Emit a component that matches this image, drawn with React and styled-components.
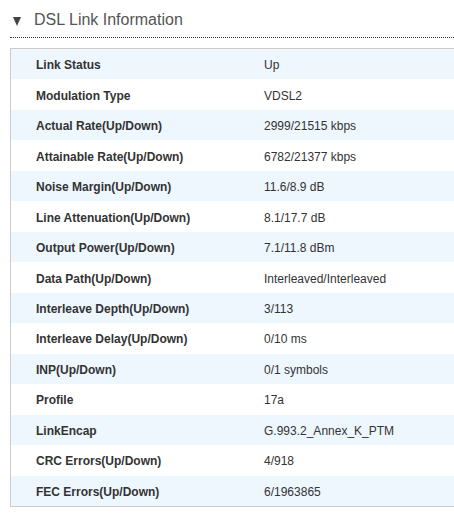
import React from 'react';
import styled, { createGlobalStyle } from 'styled-components';

const GlobalStyle = createGlobalStyle`
  body {
    margin: 0;
    background: #fff;
    font-family: "Liberation Sans", Arial, sans-serif;
  }
`;

const Page = styled.div`
  padding: 2px 0 0 10px;
  width: 444px;
`;

const Header = styled.div`
  display: flex;
  align-items: center;
  height: 36px;
  border-bottom: 1px dotted #333;
  box-sizing: border-box;
`;

const Arrow = styled.span`
  width: 0;
  height: 0;
  margin: 4px 13px 0 3px;
  border-left: 4.5px solid transparent;
  border-right: 4.5px solid transparent;
  border-top: 9px solid #444;
`;

const Title = styled.h2`
  margin: 0;
  font-size: 16px;
  font-weight: normal;
  color: #555;
`;

const Table = styled.div`
  margin-top: 10px;
  border: 1px solid #ccc;
  border-right: none;
`;

const Row = styled.div`
  display: grid;
  grid-template-columns: 228px 1fr;
  align-items: center;
  box-sizing: border-box;
  height: 30.47px;
  padding-top: 2px;
  background: ${p => (p.$odd ? '#eef6fe' : '#fff')};
  font-size: 12px;
  color: #333;
`;

const Label = styled.div`
  padding-left: 25px;
  font-weight: bold;
`;

const Value = styled.div`
  padding-left: 25px;
`;

const rows = [
  ['Link Status', 'Up'],
  ['Modulation Type', 'VDSL2'],
  ['Actual Rate(Up/Down)', '2999/21515 kbps'],
  ['Attainable Rate(Up/Down)', '6782/21377 kbps'],
  ['Noise Margin(Up/Down)', '11.6/8.9 dB'],
  ['Line Attenuation(Up/Down)', '8.1/17.7 dB'],
  ['Output Power(Up/Down)', '7.1/11.8 dBm'],
  ['Data Path(Up/Down)', 'Interleaved/Interleaved'],
  ['Interleave Depth(Up/Down)', '3/113'],
  ['Interleave Delay(Up/Down)', '0/10 ms'],
  ['INP(Up/Down)', '0/1 symbols'],
  ['Profile', '17a'],
  ['LinkEncap', 'G.993.2_Annex_K_PTM'],
  ['CRC Errors(Up/Down)', '4/918'],
  ['FEC Errors(Up/Down)', '6/1963865'],
];

export default function App() {
  return (
    <>
      <GlobalStyle />
      <Page>
        <Header>
          <Arrow />
          <Title>DSL Link Information</Title>
        </Header>
        <Table>
          {rows.map(([label, value], i) => (
            <Row key={label} $odd={i % 2 === 0}>
              <Label>{label}</Label>
              <Value>{value}</Value>
            </Row>
          ))}
        </Table>
      </Page>
    </>
  );
}
